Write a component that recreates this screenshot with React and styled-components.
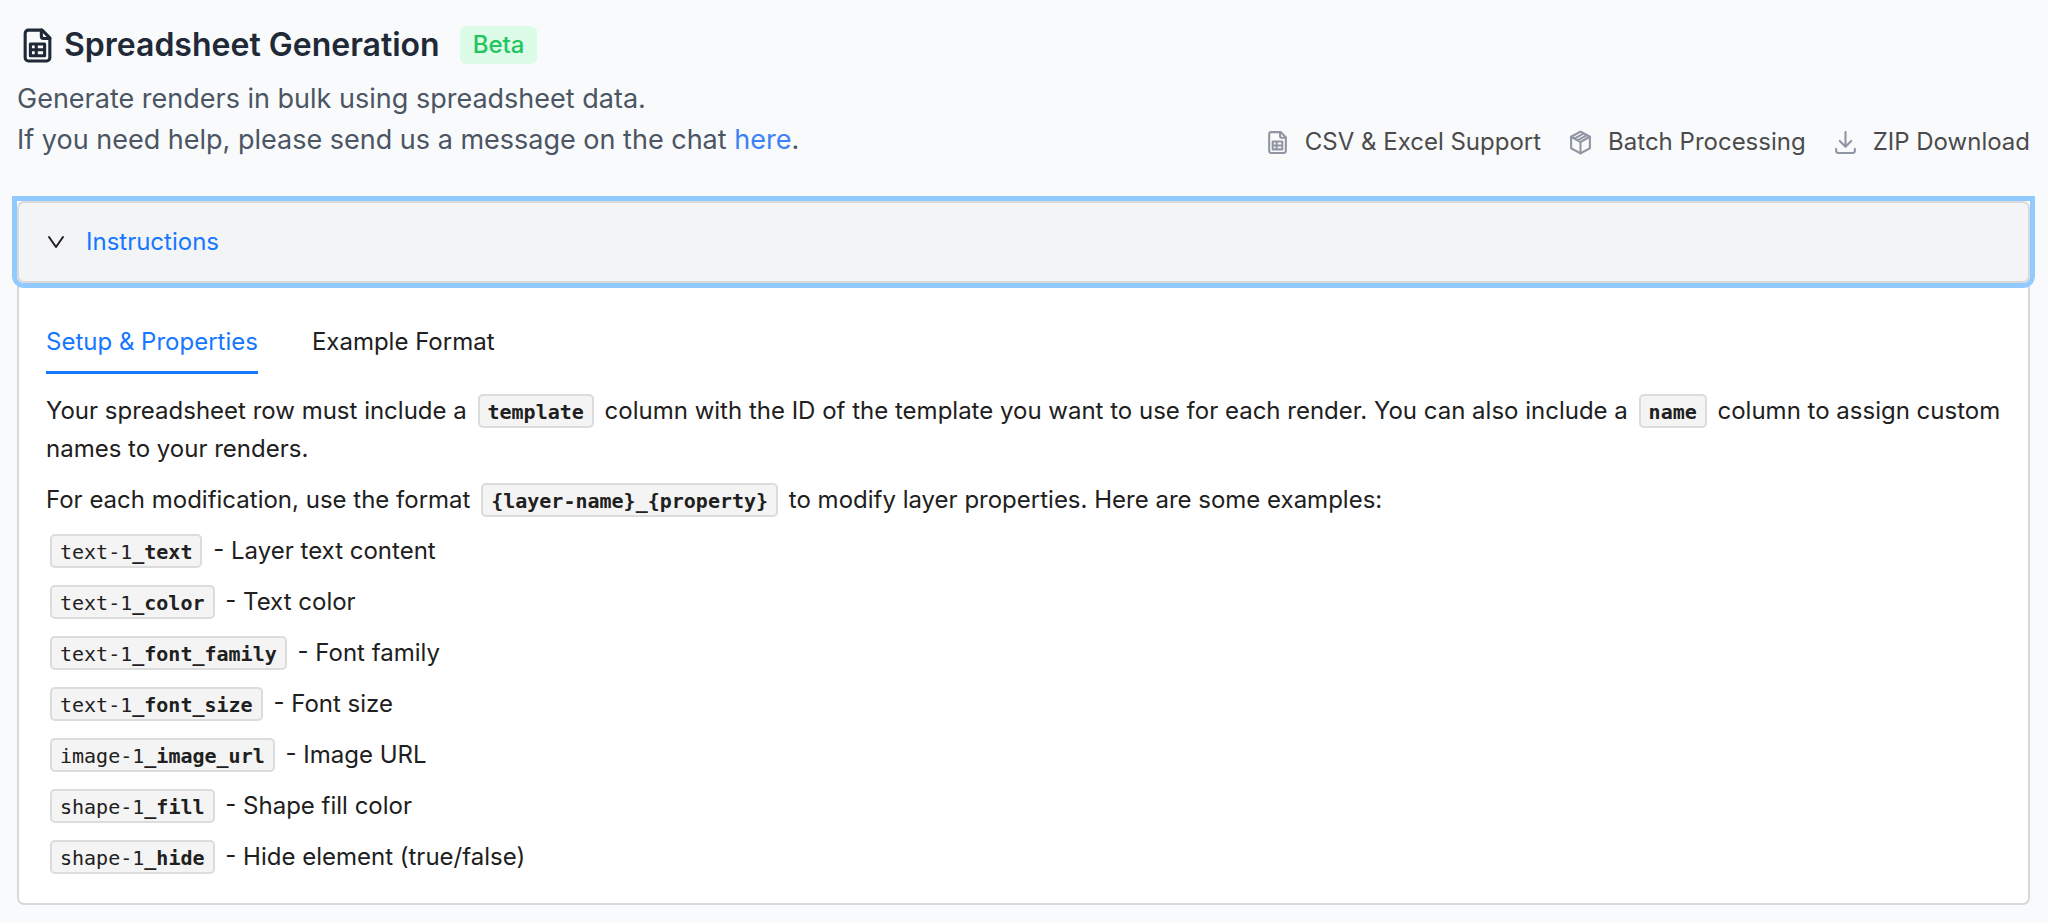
import React, { useState } from 'react';
import styled, { createGlobalStyle } from 'styled-components';

const GlobalStyle = createGlobalStyle`
  * {
    box-sizing: border-box;
  }
  body {
    margin: 0;
    background: #f9fafb;
    color: #202020;
    font-family: Inter, "Liberation Sans", sans-serif;
    font-size: 24px;
    line-height: 38px;
  }
`;

const properties = [
  { layer: 'text-1', property: '_text', description: 'Layer text content' },
  { layer: 'text-1', property: '_color', description: 'Text color' },
  { layer: 'text-1', property: '_font_family', description: 'Font family' },
  { layer: 'text-1', property: '_font_size', description: 'Font size' },
  { layer: 'image-1', property: '_image_url', description: 'Image URL' },
  { layer: 'shape-1', property: '_fill', description: 'Shape fill color' },
  { layer: 'shape-1', property: '_hide', description: 'Hide element (true/false)' }
];

const SheetIcon = () => (
  <IconStyle viewBox="0 0 24 24" aria-hidden="true">
    <path d="M15 2H6a2 2 0 0 0-2 2v16a2 2 0 0 0 2 2h12a2 2 0 0 0 2-2V7z" />
    <path d="M14.5 2v4a1.5 1.5 0 0 0 1.5 1.5h4" />
    <path d="M7.4 11h9.2v7.6H7.4zM7.4 14.8h9.2M11.2 11v7.6" />
  </IconStyle>
);

const BoxIcon = () => (
  <IconStyle viewBox="0 0 24 24" aria-hidden="true">
    <path d="M12 1.5l9 5v11l-9 5-9-5v-11z" />
    <path d="M3 6.5l9 5 9-5M12 11.5v11M6.2 8.3l9-5M9.2 10l9-5" />
  </IconStyle>
);

const DownloadIcon = () => (
  <IconStyle viewBox="0 0 24 24" aria-hidden="true">
    <path d="M12 2v13.5M6.5 10.5l5.5 5.5 5.5-5.5" />
    <path d="M3 18v2a2 2 0 0 0 2 2h14a2 2 0 0 0 2-2v-2" />
  </IconStyle>
);

const ChevronIcon = () => (
  <IconStyle viewBox="0 0 20 20" aria-hidden="true">
    <path d="M3 5l7 10 7-10" />
  </IconStyle>
);

const App = () => {
  const [isOpen, setIsOpen] = useState(true);
  const [tab, setTab] = useState('setup');

  return (
    <>
      <GlobalStyle />
      <Page>
        <Header>
          <div>
            <TitleRow>
              <TitleIcon>
                <SheetIcon />
              </TitleIcon>
              <Title>Spreadsheet Generation</Title>
              <Badge>Beta</Badge>
            </TitleRow>
            <Intro>
              Generate renders in bulk using spreadsheet data.
              <br />
              If you need help, please send us a message on the chat <Link href="#chat">here</Link>.
            </Intro>
          </div>
          <Features>
            <Feature>
              <SheetIcon />
              CSV &amp; Excel Support
            </Feature>
            <Feature>
              <BoxIcon />
              Batch Processing
            </Feature>
            <Feature>
              <DownloadIcon />
              ZIP Download
            </Feature>
          </Features>
        </Header>
        <section>
          <PanelHeading>
            <PanelToggle type="button" aria-expanded={isOpen} onClick={() => setIsOpen(!isOpen)}>
              <ChevronIcon />
              Instructions
            </PanelToggle>
          </PanelHeading>
          {isOpen && (
            <PanelBody>
              <Tabs role="tablist">
                <Tab
                  type="button"
                  role="tab"
                  aria-selected={tab === 'setup'}
                  $active={tab === 'setup'}
                  onClick={() => setTab('setup')}
                >
                  Setup &amp; Properties
                </Tab>
                <Tab
                  type="button"
                  role="tab"
                  aria-selected={tab === 'example'}
                  $active={tab === 'example'}
                  onClick={() => setTab('example')}
                >
                  Example Format
                </Tab>
              </Tabs>
              <Paragraph>
                Your spreadsheet row must include a <Code><b>template</b></Code> column with the ID of the template you
                want to use for each render. You can also include a <Code><b>name</b></Code> column to assign custom
                names to your renders.
              </Paragraph>
              <Paragraph>
                For each modification, use the format <Code><b>{'{layer-name}_{property}'}</b></Code> to modify layer
                properties. Here are some examples:
              </Paragraph>
              {properties.map(({ layer, property, description }) => (
                <Paragraph key={layer + property}>
                  <Code>{layer}<b>{property}</b></Code> - {description}
                </Paragraph>
              ))}
            </PanelBody>
          )}
        </section>
      </Page>
    </>
  );
};

export default App;

const IconStyle = styled.svg`
  width: 1em;
  height: 1em;
  flex: none;
  fill: none;
  stroke: currentColor;
  stroke-width: 2;
  stroke-linecap: round;
  stroke-linejoin: round;
`;

const Page = styled.main`
  padding: 25px 18px 18px 17px;
`;

const Header = styled.header`
  display: flex;
  align-items: flex-end;
  justify-content: space-between;
  margin-bottom: 41px;
`;

const TitleRow = styled.div`
  display: flex;
  align-items: center;
  gap: 8px;
  height: 40px;
  margin-bottom: 13px;
`;

const TitleIcon = styled.span`
  display: flex;
  padding-left: 2px;
  color: #1f2937;
  font-size: 37px;
`;

const Title = styled.h1`
  margin: 0;
  color: #1f2937;
  font-size: 32px;
  font-weight: 600;
  line-height: 40px;
`;

const Badge = styled.span`
  margin-left: 12px;
  padding: 0 13px;
  border-radius: 6px;
  background: #dcfce7;
  color: #22c55e;
  font-weight: 500;
`;

const Intro = styled.p`
  margin: 0;
  color: #4b5563;
  font-size: 27px;
  line-height: 41px;
`;

const Link = styled.a`
  color: #3b82f6;
  text-decoration: none;
`;

const Features = styled.div`
  display: flex;
  gap: 27px;
  color: #4b4b4b;
  line-height: 36px;
`;

const Feature = styled.span`
  display: flex;
  align-items: center;
  gap: 15px;

  svg {
    width: 25px;
    height: 25px;
    color: #9095a3;
  }
`;

const PanelHeading = styled.h2`
  position: relative;
  margin: 0;
  border-radius: 0 0 7px 7px;
  background: #fff;
  box-shadow: 0 0 0 5px #91caff;
  font: inherit;
`;

const PanelToggle = styled.button`
  display: flex;
  align-items: center;
  gap: 20px;
  width: 100%;
  height: 82px;
  padding: 0 27px;
  border: 2px solid #d9d9d9;
  border-radius: 7px;
  outline: none;
  background: #f3f4f6;
  color: #1677ff;
  font: inherit;
  cursor: pointer;

  svg {
    width: 20px;
    height: 20px;
    color: #202020;
  }
`;

const PanelBody = styled.div`
  padding: 27px;
  border: 2px solid #d9d9d9;
  border-top: 0;
  border-radius: 0 0 7px 7px;
  background: #fff;
`;

const Tabs = styled.div`
  display: flex;
  gap: 54px;
  margin-bottom: 18px;
`;

const Tab = styled.button`
  padding: 13px 0 10px;
  border: 0;
  border-bottom: 3px solid ${({ $active }) => ($active ? '#1677ff' : 'transparent')};
  background: transparent;
  color: ${({ $active }) => ($active ? '#1677ff' : '#202020')};
  font: inherit;
  cursor: pointer;
`;

const Paragraph = styled.p`
  margin: 0 0 13px;

  &:last-child {
    margin-bottom: 0;
  }
`;

const Code = styled.code`
  margin: 0 4px;
  padding: 4px 8px 2px;
  border: 2px solid #dcdcdc;
  border-radius: 5px;
  background: #f4f4f4;
  font-family: "DejaVu Sans Mono", monospace;
  font-size: 20px;
  line-height: 20px;
`;
